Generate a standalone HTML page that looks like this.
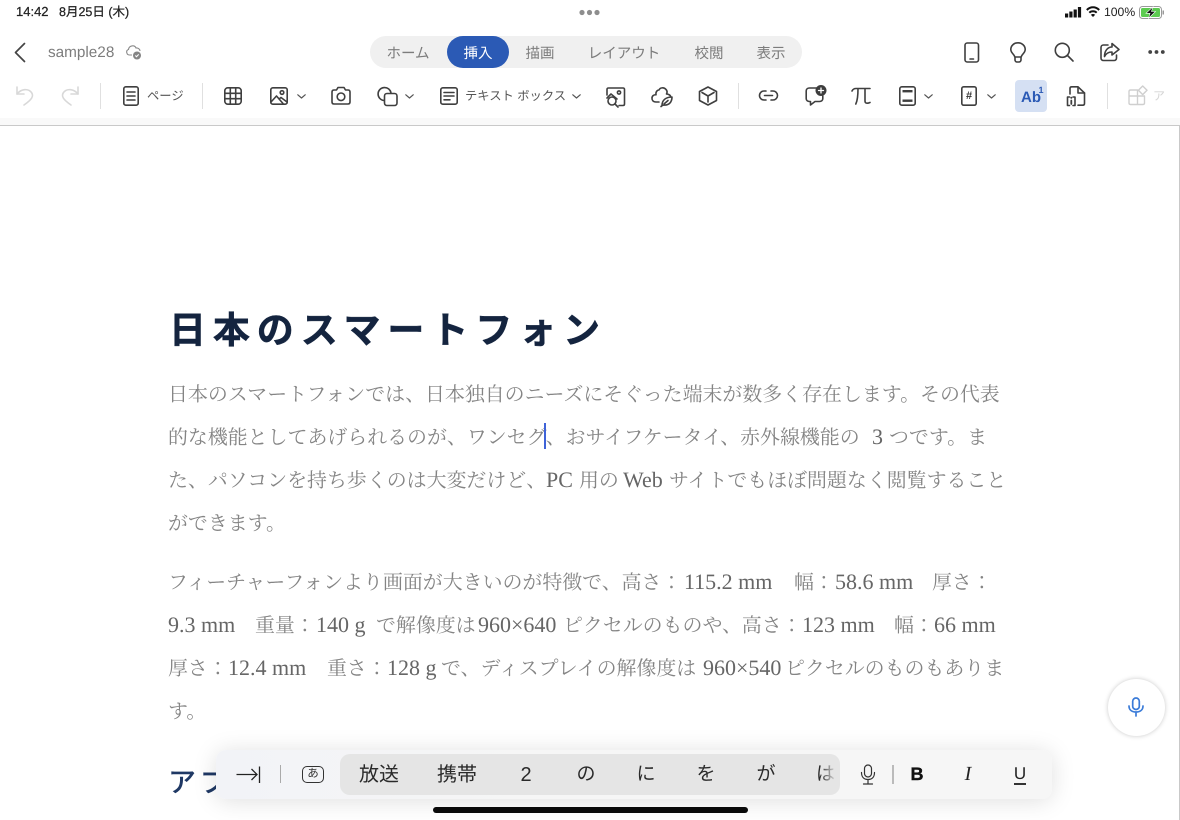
<!DOCTYPE html>
<html lang="ja"><head><meta charset="utf-8"><style>
*{margin:0;padding:0;box-sizing:border-box}
html,body{width:1180px;height:820px;overflow:hidden;background:#fff}
body{position:relative;font-family:"Liberation Sans","Noto Sans CJK JP",sans-serif;text-rendering:geometricPrecision}
.a{position:absolute;white-space:nowrap}
.l{position:absolute;height:30px;line-height:30px;white-space:pre;font-family:"Liberation Serif","Noto Serif CJK SC",serif;font-size:19.93px;color:#848484}
.e{font-size:22px;line-height:0;color:#666}
.t{position:absolute;top:38px;height:32px;line-height:32px;font-size:14.500px;color:#7c7c7c;text-align:center;white-space:nowrap}
svg{position:absolute;overflow:visible}
.i{fill:none;stroke:#3f3f3f;stroke-width:1.600;stroke-linecap:round;stroke-linejoin:round}
.c{fill:none;stroke:#555;stroke-width:1.200;stroke-linecap:round;stroke-linejoin:round}
.s{position:absolute;top:83px;width:1px;height:26px;background:#e0e0e0}
.k{position:absolute;top:750px;height:50px;line-height:50px;font-size:20px;color:#2a2a2a;text-align:center;white-space:nowrap}
</style></head><body>
<div class="a" style="left:16px;top:4px;font-size:13px;line-height:16px;color:#222;-webkit-text-stroke:.25px #222">14:42</div>
<div class="a" style="left:59px;top:4px;font-size:12.500px;line-height:16px;color:#222;-webkit-text-stroke:.25px #222">8月25日 (木)</div>
<svg style="left:579px;top:9px" width="22" height="7"><circle cx="3" cy="3.500" r="2.600" fill="#8e8e8e"/><circle cx="10.500" cy="3.500" r="2.600" fill="#8e8e8e"/><circle cx="18" cy="3.500" r="2.600" fill="#8e8e8e"/></svg>
<svg style="left:1065px;top:7px" width="17" height="11"><rect x="0" y="6.500" width="3.200" height="4" fill="#111"/><rect x="4.300" y="4.500" width="3.200" height="6" fill="#111"/><rect x="8.600" y="2.500" width="3.200" height="8" fill="#111"/><rect x="12.900" y="0" width="3.200" height="10.500" fill="#111"/></svg>
<svg style="left:1086px;top:6px" width="14" height="11" fill="none" stroke="#111" stroke-width="2" stroke-linecap="butt"><path d="M.8 4C4.500 .4 9.500 .4 13.200 4M3.300 6.700C5.300 4.800 8.700 4.800 10.700 6.700"/><path d="M4.800 8.800L7 11L9.200 8.800C8 7.700 6 7.700 4.800 8.800Z" fill="#111" stroke="none"/></svg>
<div class="a" style="left:1104px;top:4px;font-size:12.200px;line-height:16px;color:#222">100%</div>
<svg style="left:1139px;top:6px" width="26" height="13"><rect x=".5" y=".5" width="22" height="12" rx="3" fill="#fff" stroke="#9a9a9a"/><rect x="2" y="2" width="19" height="9" rx="1.500" fill="#5ccb50"/><rect x="23.500" y="4.500" width="1.500" height="4" fill="#9a9a9a"/><path d="M14 .8L7 7.300H11L9.500 12.300L16.500 5.500H12.500Z" fill="#111" stroke="#fff" stroke-width=".6"/></svg>

<svg style="left:14px;top:42px" width="14" height="22" fill="none" stroke="#444" stroke-width="1.700" stroke-linecap="round" stroke-linejoin="round"><path d="M10.500 1.500L1.500 10.500L10.500 19.500"/></svg>
<div class="a" style="left:48px;top:43px;font-size:15.300px;line-height:20px;color:#7d7d7d">sample28</div>
<svg style="left:125px;top:43px" width="18" height="17" fill="none" stroke="#888" stroke-width="1.100"><path d="M7 12H4.500C1.500 12 .5 7.500 3.500 6.500C4 2.500 9.500 1.500 11 5C13 4.800 15 6 15 8"/><circle cx="12" cy="12.500" r="4" fill="#858585" stroke="none"/><path d="M10.300 12.500L11.500 13.700L13.700 11.400" stroke="#fff"/></svg>

<div class="a" style="left:370px;top:36px;width:432px;height:32px;border-radius:16px;background:#f0f0f0"></div>
<div class="a" style="left:447px;top:36px;width:62px;height:32px;border-radius:16px;background:#2b5ab5"></div>
<div class="t" style="left:378px;width:60px">ホーム</div>
<div class="t" style="left:447px;width:62px;color:#fff">挿入</div>
<div class="t" style="left:510px;width:60px">描画</div>
<div class="t" style="left:579px;width:90px">レイアウト</div>
<div class="t" style="left:679px;width:60px">校閲</div>
<div class="t" style="left:741px;width:60px">表示</div>

<svg style="left:964px;top:42px" width="16" height="21" class="i"><rect x="1" y="1" width="13.500" height="19" rx="2.200"/><path d="M6 17H9.500"/></svg>
<svg style="left:1010px;top:42px" width="16" height="21" class="i"><path d="M4.800 15C4.500 12.500 .8 11 .8 7.500C.8 3.800 4 .8 8 .8C12 .8 15.200 3.800 15.200 7.500C15.200 11 11.500 12.500 11.200 15ZM5 15V18C5 19.200 6 20 7 20H9C10 20 11 19.200 11 18V15"/></svg>
<svg style="left:1054px;top:42px" width="20" height="20" class="i"><circle cx="8.300" cy="8.300" r="7"/><path d="M13.500 13.500L19 19"/></svg>
<svg style="left:1100px;top:42px" width="20" height="20" class="i"><path d="M8 3H3.500C2 3 1 4 1 5.500V16C1 17.500 2 18.500 3.500 18.500H14C15.500 18.500 16.500 17.500 16.500 16V13"/><path d="M12 1.500L19 7.500L12 13V10C8.500 10 6 11.500 4.500 14.500C4.500 9 7.500 5 12 5Z"/></svg>
<svg style="left:1148px;top:49px" width="17" height="6"><circle cx="2.200" cy="3" r="1.900" fill="#444"/><circle cx="8.500" cy="3" r="1.900" fill="#444"/><circle cx="14.800" cy="3" r="1.900" fill="#444"/></svg>

<svg style="left:15px;top:85px" width="20" height="22" fill="none" stroke="#d8d8d8" stroke-width="1.600" stroke-linecap="round" stroke-linejoin="round"><path d="M2 2V9H9"/><path d="M2 9C6 4 13 3 16.500 7.500C19 11 17 14.500 9 20"/></svg>
<svg style="left:60px;top:85px" width="20" height="22" fill="none" stroke="#d8d8d8" stroke-width="1.600" stroke-linecap="round" stroke-linejoin="round"><path d="M18 2V9H11"/><path d="M18 9C14 4 7 3 3.500 7.500C1 11 3 14.500 11 20"/></svg>
<div class="s" style="left:100px"></div>
<svg style="left:123px;top:86px" width="16" height="20" class="i"><rect x=".8" y=".8" width="14.400" height="18.400" rx="2"/><path d="M4 6H12M4 10H12M4 14H12"/></svg>
<div class="a" style="left:147px;top:87px;font-size:12.300px;line-height:18px;color:#555">ページ</div>
<div class="s" style="left:202px"></div>
<svg style="left:224px;top:87px" width="18" height="18" class="i"><rect x=".8" y=".8" width="16.400" height="16.400" rx="3"/><path d="M6.300 1V17M11.700 1V17M1 6.300H17M1 11.700H17"/></svg>
<svg style="left:270px;top:87px" width="18" height="18" class="i"><rect x=".8" y=".8" width="16.400" height="16.400" rx="2"/><path d="M1 15L6.500 9L13 16.500M9 12L11 10.500L17 15"/><circle cx="12" cy="5.500" r="1.800"/></svg>
<svg style="left:297px;top:94px" width="9" height="5" class="c"><path d="M.8 .8L4.500 4L8.200 .8"/></svg>
<svg style="left:331px;top:86px" width="20" height="19" class="i"><path d="M3 4H5.500L7 1.500H13L14.500 4H17C18.200 4 19 4.800 19 6V16C19 17.200 18.200 18 17 18H3C1.800 18 1 17.200 1 16V6C1 4.800 1.800 4 3 4Z"/><circle cx="10" cy="10.800" r="3.800"/></svg>
<svg style="left:377px;top:86px" width="21" height="20" class="i"><path d="M7 14.500A6.500 6.500 0 1 1 14 7"/><rect x="7.500" y="7.500" width="12.500" height="12" rx="2.500"/></svg>
<svg style="left:405px;top:94px" width="9" height="5" class="c"><path d="M.8 .8L4.500 4L8.200 .8"/></svg>
<svg style="left:440px;top:87px" width="18" height="18" class="i"><rect x=".8" y=".8" width="16.400" height="16.400" rx="2"/><path d="M4 5.500H14M4 9H14M4 12.800H10"/></svg>
<div class="a" style="left:465px;top:87px;font-size:12.300px;line-height:18px;color:#555">テキスト ボックス</div>
<svg style="left:572px;top:94px" width="9" height="5" class="c"><path d="M.8 .8L4.500 4L8.200 .8"/></svg>
<svg style="left:606px;top:87px" width="20" height="20" class="i"><path d="M1 8V2.500C1 1.500 1.500 1 2.500 1H17C18 1 18.500 1.500 18.500 2.500V17C18.500 18 18 18.500 17 18.500H13"/><path d="M1 11L5 7L11 12"/><circle cx="13" cy="5.500" r="1.600"/><circle cx="6" cy="14" r="4"/><path d="M9 17L12 20"/></svg>
<svg style="left:651px;top:86px" width="22" height="21" class="i"><path d="M8 16H5C2 16 .8 14 1 12C1 10 3 8.500 5 8.800C4.500 5 7 4 8 4C9 1.500 13 1 15 3.500C16.500 5 16 7 15.500 8C17 8 19 9 19.500 10"/><path d="M11 19.500C11 14 15 11 21 11C21 16 18 19.500 13 19C12 19 11 19.500 10 20.500M13 18L17 14.500"/></svg>
<svg style="left:698px;top:86px" width="20" height="20" class="i"><path d="M10 1L18.500 5.500V14.500L10 19L1.500 14.500V5.500Z"/><path d="M4 6.500L10 10L16 6.500M10 10V16"/></svg>
<div class="s" style="left:738px"></div>
<svg style="left:758px;top:89px" width="21" height="13" class="i" stroke-width="1.700"><path d="M8 2H6A4.500 4.500 0 0 0 6 11H8M13 2H15A4.500 4.500 0 0 1 15 11H13M6.500 6.500H14.500"/></svg>
<svg style="left:805px;top:85px" width="22" height="21" class="i"><path d="M12 3H4.500C2.500 3 1.200 4.200 1.200 6V13.500C1.200 15.300 2.500 16.500 4.500 16.500H5.500L5.500 20L10 16.500H14.500C16.500 16.500 17.800 15.300 17.800 13.500V11"/><circle cx="16" cy="5.500" r="5.500" fill="#3d3d3d" stroke="none"/><path d="M13.500 5.500H18.500M16 3V8" stroke="#fff" stroke-width="1.300"/></svg>
<svg style="left:851px;top:87px" width="20" height="18" class="i"><path d="M1 4C2 2 3.500 1.500 5 1.500H19M7 1.500C7 8 6.800 13 4.800 17M14 1.500V14C14 16 15.500 17 19 15.500"/></svg>
<svg style="left:899px;top:86px" width="17" height="20" class="i"><rect x=".8" y=".8" width="15.400" height="18.400" rx="2"/><rect x="3.500" y="4" width="10" height="2.400" fill="#3f3f3f" stroke="none"/><rect x="3.500" y="13.500" width="10" height="2.400" fill="#3f3f3f" stroke="none"/></svg>
<svg style="left:924px;top:94px" width="9" height="5" class="c"><path d="M.8 .8L4.500 4L8.200 .8"/></svg>
<svg style="left:961px;top:86px" width="16" height="20" class="i"><rect x=".8" y=".8" width="14.400" height="18.400" rx="1.800"/></svg>
<div class="a" style="left:961px;top:87px;width:16px;text-align:center;font-size:11px;line-height:18px;font-weight:bold;color:#333">#</div>
<svg style="left:987px;top:94px" width="9" height="5" class="c"><path d="M.8 .8L4.500 4L8.200 .8"/></svg>
<div class="a" style="left:1015px;top:80px;width:32px;height:32px;background:#d5e0f3;border-radius:4px"></div>
<div class="a" style="left:1021px;top:88px;font-size:15px;line-height:20px;font-weight:bold;color:#2b5ab5">Ab</div>
<div class="a" style="left:1038.500px;top:85px;font-size:9px;line-height:10px;font-weight:bold;color:#2b5ab5">1</div>
<svg style="left:1066px;top:86px" width="20" height="21" class="i"><path d="M4 8V2.500C4 1.500 4.700 .8 5.700 .8H12L18.500 7V17.500C18.500 18.500 17.800 19.200 16.800 19.200H12"/><path d="M12 1V7H18.500"/><path d="M3.500 11H1.500V19.500H3.500M7 11H9V19.500H7"/><path d="M5.300 14.500V18" stroke-width="1.800"/><circle cx="5.300" cy="11.700" r="1" fill="#3f3f3f" stroke="none"/></svg>
<div class="s" style="left:1107px"></div>
<svg style="left:1128px;top:85px" width="20" height="21" fill="none" stroke="#cfcfcf" stroke-width="1.400" stroke-linejoin="round"><path d="M9.500 5H2.500C1.500 5 1 5.500 1 6.500V18C1 19 1.500 19.500 2.500 19.500H15C16 19.500 16.500 19 16.500 18V11H9.500ZM9.500 11H1M9.500 11V19.500"/><path d="M14.700 1L19 5.300L14.700 9.600L10.400 5.300Z"/></svg>
<div class="a" style="left:1153px;top:87px;font-size:12px;line-height:18px;color:#d5d5d5">ア</div>

<div class="a" style="left:0;top:118px;width:1180px;height:8px;background:#f9f9f9;border-bottom:1px solid #c9c9c9"></div>
<div class="a" style="left:1179px;top:126px;width:1px;height:694px;background:#c9c9c9"></div>

<div class="a" style="left:169px;top:303px;height:56px;line-height:56px;font-size:37px;font-weight:bold;letter-spacing:6.900px;color:#14243f;-webkit-text-stroke:.5px #14243f">日本のスマートフォン</div>

<div class="l" style="left:168px;top:380px">日本のスマートフォンでは、日本独自のニーズにそぐった端末が数多く存在します。その代表</div>

<div class="l" style="left:168px;top:423px">的な機能としてあげられるのが、ワンセグ、おサイフケータイ、赤外線機能の</div>
<div class="l" style="left:872px;top:423px"><span class="e">3</span></div>
<div class="l" style="left:889px;top:423px">つです。ま</div>
<div class="a" style="left:544px;top:423px;width:2px;height:26px;background:#3f63d8"></div>

<div class="l" style="left:168px;top:466px">た、パソコンを持ち歩くのは大変だけど、</div>
<div class="l" style="left:546px;top:466px"><span class="e">PC</span></div>
<div class="l" style="left:579px;top:466px">用の</div>
<div class="l" style="left:623px;top:466px"><span class="e">Web</span></div>
<div class="l" style="left:669px;top:466px">サイトでもほぼ問題なく閲覧すること</div>

<div class="l" style="left:168px;top:509px">ができます。</div>

<div class="l" style="left:168px;top:568px">フィーチャーフォンより画面が大きいのが特徴で、高さ：</div>
<div class="l" style="left:684px;top:568px"><span class="e">115.2 mm</span></div>
<div class="l" style="left:794px;top:568px">幅：</div>
<div class="l" style="left:835px;top:568px"><span class="e">58.6 mm</span></div>
<div class="l" style="left:932px;top:568px">厚さ：</div>

<div class="l" style="left:168px;top:611px"><span class="e">9.3 mm</span></div>
<div class="l" style="left:255px;top:611px">重量：</div>
<div class="l" style="left:316px;top:611px"><span class="e">140 g</span></div>
<div class="l" style="left:376px;top:611px">で解像度は</div>
<div class="l" style="left:478px;top:611px"><span class="e">960×640</span></div>
<div class="l" style="left:563px;top:611px">ピクセルのものや、高さ：</div>
<div class="l" style="left:802px;top:611px"><span class="e">123 mm</span></div>
<div class="l" style="left:894px;top:611px">幅：</div>
<div class="l" style="left:934px;top:611px"><span class="e">66 mm</span></div>

<div class="l" style="left:168px;top:654px">厚さ：</div>
<div class="l" style="left:228px;top:654px"><span class="e">12.4 mm</span></div>
<div class="l" style="left:327px;top:654px">重さ：</div>
<div class="l" style="left:387px;top:654px"><span class="e">128 g</span></div>
<div class="l" style="left:441px;top:654px">で、ディスプレイの解像度は</div>
<div class="l" style="left:703px;top:654px"><span class="e">960×540</span></div>
<div class="l" style="left:785px;top:654px">ピクセルのものもありま</div>

<div class="l" style="left:168px;top:697px">す。</div>

<div class="a" style="left:168px;top:758px;height:50px;line-height:50px;font-size:28px;font-weight:500;letter-spacing:4px;color:#1f3864">アプリ</div>

<div class="a" style="left:1108px;top:679px;width:57px;height:57px;border-radius:50%;background:#fff;box-shadow:0 0 5px rgba(0,0,0,.22)"></div>
<svg style="left:1128px;top:697px" width="16" height="20" fill="none" stroke="#3a7bd8" stroke-width="1.700" stroke-linecap="round"><rect x="4.700" y="1" width="6.600" height="11.500" rx="3.300"/><path d="M1 9C1 13 4 15 8 15C12 15 15 13 15 9M8 15V19"/></svg>

<div class="a" style="left:216px;top:750px;width:836px;height:49px;border-radius:10px;background:linear-gradient(90deg,#f2f3f7,#f6f6f6 40%);box-shadow:0 2px 24px rgba(0,0,0,.13)"></div>
<div class="a" style="left:340px;top:754px;width:500px;height:41px;border-radius:10px;background:#e5e5e5"></div>
<svg style="left:236px;top:765px" width="25" height="19" fill="none" stroke="#222" stroke-width="1.300"><path d="M.5 9.500H21M15.500 4L21 9.500L15.500 15M23.500 1.500V18"/></svg>
<div class="a" style="left:280px;top:765px;width:1px;height:18px;background:#aaa"></div>
<div class="a" style="left:302px;top:766px;width:22px;height:17px;border:1.300px solid #333;border-radius:5px;font-size:11.500px;line-height:14px;text-align:center;color:#333">あ</div>
<div class="k" style="left:349px;width:60px">放送</div>
<div class="k" style="left:427px;width:60px">携帯</div>
<div class="k" style="left:506px;width:40px">2</div>
<div class="k" style="left:566px;width:40px;font-size:19px">の</div>
<div class="k" style="left:626px;width:40px;font-size:19px">に</div>
<div class="k" style="left:686px;width:40px;font-size:19px">を</div>
<div class="k" style="left:746px;width:40px;font-size:19px">が</div>
<div class="a" style="left:816px;top:750px;width:20px;height:50px;line-height:50px;font-size:19px;overflow:hidden;color:#2a2a2a;-webkit-mask-image:linear-gradient(90deg,#000 20%,transparent 100%)">は</div>
<svg style="left:860px;top:764px" width="16" height="21" fill="none" stroke="#333" stroke-width="1.200" stroke-linecap="round"><rect x="4.500" y="1" width="7" height="12" rx="3.500"/><path d="M1.500 8.500C1.500 13 4 15.500 8 15.500C12 15.500 14.500 13 14.500 8.500M8 15.500V19.500M3.500 20H12.500"/></svg>
<div class="a" style="left:892px;top:765px;width:1.500px;height:19px;background:#bbb"></div>
<div class="a" style="left:908px;top:762px;width:18px;text-align:center;font-size:18px;line-height:25px;font-weight:bold;color:#111;-webkit-text-stroke:.4px #111">B</div>
<div class="a" style="left:959px;top:762px;width:18px;text-align:center;font-size:20px;line-height:25px;font-style:italic;color:#222;font-family:'Liberation Serif',serif">I</div>
<div class="a" style="left:1011px;top:761px;width:18px;text-align:center;font-size:17px;line-height:25px;color:#222">U</div>
<div class="a" style="left:1014px;top:783px;width:12px;height:1.500px;background:#333"></div>
<div class="a" style="left:433px;top:807px;width:315px;height:6px;border-radius:3px;background:#0a0a0a"></div>
</body></html>
